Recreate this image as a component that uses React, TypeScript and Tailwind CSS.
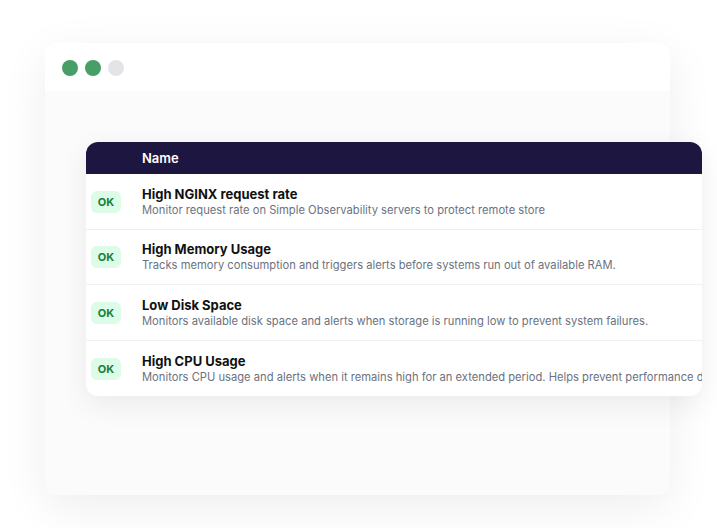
const rows = [
  {
    title: 'High NGINX request rate',
    desc: 'Monitor request rate on Simple Observability servers to protect remote store',
  },
  {
    title: 'High Memory Usage',
    desc: 'Tracks memory consumption and triggers alerts before systems run out of available RAM.',
  },
  {
    title: 'Low Disk Space',
    desc: 'Monitors available disk space and alerts when storage is running low to prevent system failures.',
  },
  {
    title: 'High CPU Usage',
    desc: 'Monitors CPU usage and alerts when it remains high for an extended period. Helps prevent performance degradation.',
  },
];

export default function App() {
  return (
    <div className="w-[717px] h-[528px] bg-white overflow-hidden pt-[43px] pl-[45px] font-['Inter','Liberation_Sans',sans-serif]">
      {/* window */}
      <div className="w-[625px] h-[452px] rounded-[12px] bg-[#fbfbfc] shadow-[0_12px_48px_rgba(0,0,0,0.07)]">
        <div className="h-[48px] bg-white rounded-t-[12px] flex items-center gap-[7px] pl-[17px] pt-[1px]">
          <span className="w-[16px] h-[16px] rounded-full bg-[#479e66]" />
          <span className="w-[16px] h-[16px] rounded-full bg-[#479e66]" />
          <span className="w-[16px] h-[16px] rounded-full bg-[#e3e3e8]" />
        </div>

        <div className="pt-[51px] pl-[41px]">
          {/* alerts table */}
          <div className="w-[616px] rounded-[12px] bg-white overflow-hidden shadow-[0_8px_30px_rgba(0,0,0,0.07)]">
            <div className="h-[32px] bg-[#1c1641] flex items-center pl-[56px] pt-[1px]">
              <span className="text-[13px] font-semibold text-white">Name</span>
            </div>
            {rows.map((r, i) => (
              <div
                key={r.title}
                className={`flex items-center h-[55.5px] pt-[1px] ${i < rows.length - 1 ? 'border-b border-[#eef0f5]' : ''}`}
              >
                <div className="w-[56px] shrink-0 pl-[5px]">
                  <span className="flex items-center justify-center w-[30px] h-[22px] rounded-[6px] bg-[#dcfce7] text-[#15803d] text-[11px] font-bold">
                    OK
                  </span>
                </div>
                <div className="min-w-0">
                  <div className="text-[13px] leading-[16px] font-bold text-[#111111] whitespace-nowrap">{r.title}</div>
                  <div className="text-[11.2px] leading-[16px] text-[#6b7280] whitespace-nowrap">{r.desc}</div>
                </div>
              </div>
            ))}
          </div>
        </div>
      </div>
    </div>
  );
}
